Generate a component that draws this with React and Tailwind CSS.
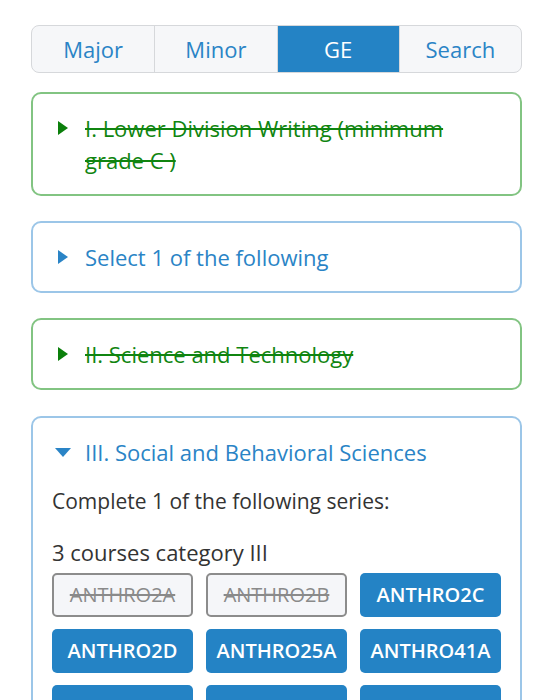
import React from 'react';

const tabs = ['Major', 'Minor', 'GE', 'Search'];

const courses = [
  { code: 'ANTHRO2A', done: true },
  { code: 'ANTHRO2B', done: true },
  { code: 'ANTHRO2C' },
  { code: 'ANTHRO2D' },
  { code: 'ANTHRO25A' },
  { code: 'ANTHRO41A' },
  { code: 'ANTHRO125X' },
  { code: 'ANTHRO128A' },
  { code: 'ANTHRO128B' },
];

const RightArrow = ({ color }) => (
  <svg width="10" height="14" viewBox="0 0 10 14" className="ml-[3px]">
    <path d="M0 0 L10 7 L0 14 Z" fill={color} />
  </svg>
);

const DownArrow = ({ color }) => (
  <svg width="16" height="9" viewBox="0 0 16 9">
    <path d="M0 0 L16 0 L8 9 Z" fill={color} />
  </svg>
);

const Section = ({ title, done }) => (
  <div
    className={`border-2 rounded-[10px] px-[22px] py-[18px] ${
      done ? 'border-[#82c482]' : 'border-[#9cc6e8]'
    }`}
  >
    <div className="flex items-start">
      <div className="w-[30px] h-[32px] shrink-0 flex items-center">
        <RightArrow color={done ? '#0b7f0b' : '#2a84c6'} />
      </div>
      <span
        className={`text-[22px] leading-[32px] pr-[18px] ${
          done ? 'text-[#108510] line-through' : 'text-[#2a84c6]'
        }`}
      >
        {title}
      </span>
    </div>
  </div>
);

export default function App() {
  return (
    <div className="bg-white min-h-[700px] pl-[31px] pr-[30px] pt-[25px] font-['Open_Sans',sans-serif]">
      <div className="grid grid-cols-4 h-[48px] border border-[#d6d8db] rounded-lg overflow-hidden bg-[#f6f7f9]">
        {tabs.map((t, i) => (
          <div
            key={t}
            className={`flex items-center justify-center text-[22px] ${
              i > 0 ? 'border-l border-[#d6d8db]' : ''
            } ${t === 'GE' ? 'bg-[#2483c5] text-white' : 'text-[#2a84c6]'}`}
          >
            {t}
          </div>
        ))}
      </div>

      <div className="mt-[19px] flex flex-col gap-[25px]">
        <Section title="I. Lower Division Writing (minimum grade C )" done />
        <Section title="Select 1 of the following" />
        <Section title="II. Science and Technology" done />

        {/* open section */}
        <div className="mt-[1px] border-2 border-[#9cc6e8] rounded-[10px] px-[19px] pt-[18px] pb-[18px]">
          <div className="flex items-center pl-[3px] h-[32px]">
            <div className="w-[30px] shrink-0 flex items-center">
              <DownArrow color="#2a84c6" />
            </div>
            <span className="text-[22px] leading-[32px] text-[#2a84c6]">
              III. Social and Behavioral Sciences
            </span>
          </div>
          <p className="mt-[17px] text-[21px] leading-[32px] text-[#333]">
            Complete 1 of the following series:
          </p>
          <p className="mt-[19px] text-[22px] leading-[32px] text-[#333]">3 courses category III</p>
          <div className="mt-[5px] grid grid-cols-3 gap-x-[13px] gap-y-[12px]">
            {courses.map(c => (
              <div
                key={c.code}
                className={`h-[44px] rounded-[5px] flex items-center justify-center text-[20px] ${
                  c.done
                    ? 'border-2 border-[#8c8c8c] bg-[#f5f6f9] text-[#8a8a8a] line-through'
                    : 'bg-[#2483c5] text-white font-semibold'
                }`}
              >
                {c.code}
              </div>
            ))}
          </div>
        </div>
      </div>
    </div>
  );
}
